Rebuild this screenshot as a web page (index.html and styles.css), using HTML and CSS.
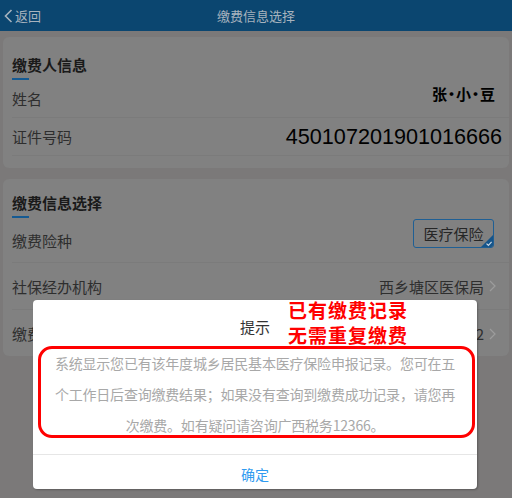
FILE: index.html
```html
<!DOCTYPE html>
<html lang="zh-CN">
<head>
<meta charset="utf-8">
<title>缴费信息选择</title>
<link rel="stylesheet" href="styles.css">
</head>
<body>
<div class="page">
  <header class="topbar">
    <div class="back">
      <svg class="back-icon" width="9" height="14" viewBox="0 0 9 14"><path d="M7.5 1 L1.5 7 L7.5 13" fill="none" stroke="currentColor" stroke-width="1.6"/></svg>
      <span>返回</span>
    </div>
    <div class="title">缴费信息选择</div>
    <div class="spacer"></div>
  </header>

  <main class="content">
    <section class="card card-payer">
      <div class="sec-head">
        <h2 class="sec-title">缴费人信息</h2>
        <span class="sec-bar"></span>
      </div>
      <div class="row row-s">
        <span class="label">姓名</span>
        <span class="name">张·小·豆</span>
      </div>
      <div class="row row-s">
        <span class="label">证件号码</span>
        <span class="idno">450107201901016666</span>
      </div>
    </section>

    <section class="card card-pay">
      <div class="sec-head">
        <h2 class="sec-title">缴费信息选择</h2>
        <span class="sec-bar"></span>
      </div>
      <div class="row row-l row-first">
        <span class="label">缴费险种</span>
        <span class="chip">医疗保险
          <svg class="chip-check" width="12" height="12" viewBox="0 0 12 12"><path d="M12 0 L12 12 L0 12 Z" fill="#15548a"/><path d="M5.5 8.6 L7.4 10.3 L10.6 6.8" fill="none" stroke="#c9d6e2" stroke-width="1.2"/></svg>
        </span>
      </div>
      <div class="row row-l">
        <span class="label">社保经办机构</span>
        <span class="value">西乡塘区医保局
          <svg class="chev" width="7" height="12" viewBox="0 0 7 12"><path d="M1 1 L6 6 L1 11" fill="none" stroke="currentColor" stroke-width="1.2"/></svg>
        </span>
      </div>
      <div class="row row-l row-last">
        <span class="label">缴费年度</span>
        <span class="value">2022
          <svg class="chev" width="7" height="12" viewBox="0 0 7 12"><path d="M1 1 L6 6 L1 11" fill="none" stroke="currentColor" stroke-width="1.2"/></svg>
        </span>
      </div>
    </section>
  </main>

  <div class="dialog">
    <div class="dialog-title">提示</div>
    <div class="dialog-body">系统显示您已有该年度城乡居民基本医疗保险申报记录。您可在五<br>个工作日后查询缴费结果；如果没有查询到缴费成功记录，请您再<br>次缴费。如有疑问请咨询广西税务12366。</div>
    <div class="dialog-foot">确定</div>
    <div class="mark-box"></div>
  </div>

  <div class="note">已有缴费记录<br>无需重复缴费</div>
</div>
</body>
</html>
```

FILE: styles.css
```css
* { box-sizing: border-box; margin: 0; padding: 0; }

html, body {
  width: 512px;
  height: 498px;
  overflow: hidden;
}

body {
  background: #7b7979;
  font-family: "Noto Sans CJK SC", "Noto Sans", sans-serif;
  color: #2c2c2c;
}

.page {
  position: relative;
  width: 512px;
  height: 498px;
}

.topbar {
  height: 31px;
  background: #0b4670;
  color: #a7b3be;
  display: flex;
  align-items: center;
  font-size: 13px;
}

.back {
  width: 80px;
  display: flex;
  align-items: center;
  gap: 2px;
  padding-left: 4px;
}

.back-icon { display: block; }

.title {
  flex: 1;
  text-align: center;
}

.spacer { width: 80px; }

.content {
  display: flex;
  flex-direction: column;
  gap: 11px;
  padding: 6px 3px 0;
}

.card {
  background: #818181;
  border-radius: 6px;
}

.card-payer { padding: 18px 0 12px; }
.card-pay { padding: 14px 0 0; height: 177px; overflow: hidden; }

.sec-head {
  padding-left: 9px;
  height: 25px;
}

.sec-title {
  font-size: 15px;
  font-weight: bold;
  line-height: 20px;
  color: #1a1a1a;
}

.sec-bar {
  display: block;
  width: 17px;
  height: 2px;
  margin-top: 3px;
  background: #155a92;
}

.row {
  display: flex;
  align-items: center;
  justify-content: space-between;
  margin-left: 9px;
  border-bottom: 1px solid #7b7b7b;
}

.row-s { height: 38px; }
.row-l { height: 47px; }
.row-first { height: 45px; }
.row-last { border-bottom: none; }

.label {
  font-size: 15px;
  color: #2e2e2e;
}

.name {
  font-size: 15px;
  font-weight: bold;
  color: #000;
  margin-right: 17px;
  letter-spacing: -3px;
  margin-top: -10px;
}

.idno {
  font-family: "Liberation Sans", "Noto Sans", sans-serif;
  font-size: 21.6px;
  color: #000;
  margin-right: 7px;
}

.chip {
  position: relative;
  width: 81px;
  height: 29px;
  border: 1px solid #1f5f94;
  border-radius: 3px;
  font-size: 15px;
  line-height: 27px;
  text-align: center;
  color: #262626;
  margin-right: 15px;
  margin-top: -14px;
  overflow: hidden;
}

.chip-check {
  position: absolute;
  right: 0;
  bottom: 0;
}

.value {
  display: flex;
  align-items: center;
  gap: 5px;
  font-size: 15px;
  color: #2e2e2e;
  margin-right: 13px;
}

.chev {
  color: #9c9c9c;
  display: block;
}

/* dialog overlay */
.dialog {
  position: absolute;
  left: 33px;
  top: 300px;
  width: 444px;
  height: 189px;
  background: #fff;
  border-radius: 4px;
  box-shadow: 1px 1px 2px rgba(0,0,0,0.25);
}

.dialog-title {
  padding: 17px 0 11px;
  font-size: 15px;
  line-height: 20px;
  text-align: center;
  color: #333;
}

.dialog-body {
  font-size: 14px;
  line-height: 31px;
  letter-spacing: -0.2px;
  text-align: center;
  color: #a8a8a8;
  padding-bottom: 13px;
  border-bottom: 1px solid #e6e6e6;
  white-space: nowrap;
}

.dialog-foot {
  height: 34px;
  padding-top: 4px;
  font-size: 14px;
  line-height: 31px;
  text-align: center;
  color: #2f9bf0;
}

.mark-box {
  position: absolute;
  left: 5px;
  top: 46px;
  width: 437px;
  height: 92px;
  border: 3px solid #ff0000;
  border-radius: 14px;
}

.note {
  position: absolute;
  left: 288px;
  top: 297px;
  font-size: 19px;
  line-height: 25px;
  font-weight: bold;
  letter-spacing: 1px;
  color: #ff0000;
}
```
